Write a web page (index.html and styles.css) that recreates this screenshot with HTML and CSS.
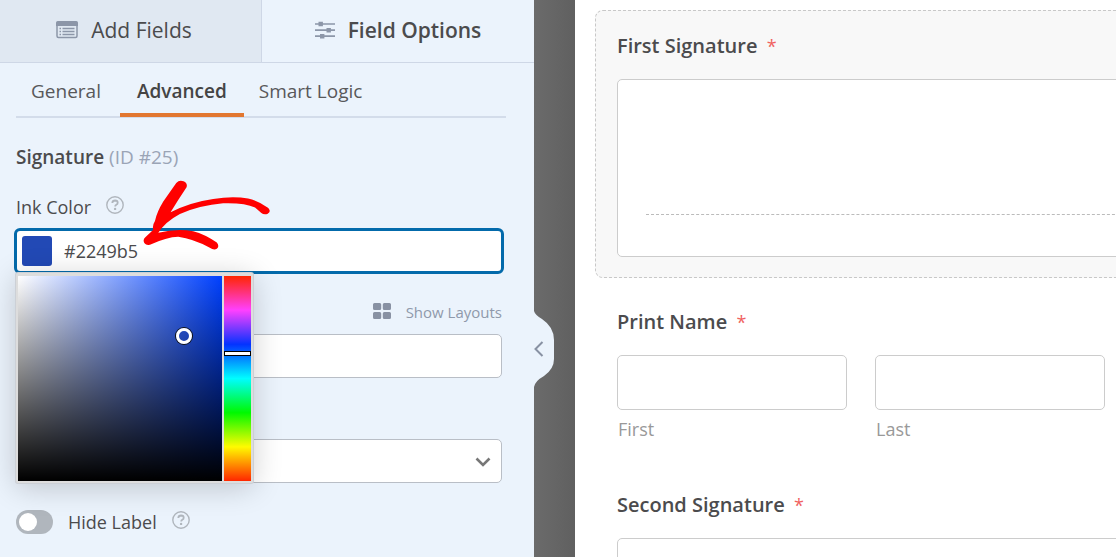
FILE: index.html
```html
<!DOCTYPE html>
<html lang="en">
<head>
<meta charset="utf-8">
<title>Form Builder</title>
<link rel="stylesheet" href="styles.css">
</head>
<body>
<div class="builder">
  <aside class="sidebar">
    <nav class="tabs">
      <button type="button" class="tab">
        <svg class="tab-icon" width="22" height="18" viewBox="0 0 22 18" aria-hidden="true">
          <rect x="1" y="1" width="20" height="15.5" rx="1.5" fill="none" stroke="#8c96a8" stroke-width="1.5"/>
          <path d="M0 2q0-2 2-2h18q2 0 2 2v3H0z" fill="#8c96a8"/>
          <path d="M3.500 7.500h1.500M3.500 10.500h1.500M3.500 13.500h1.500M6.500 7.500h12M6.500 10.500h12M6.500 13.500h12" stroke="#8c96a8" stroke-width="1.600"/>
        </svg>
        Add Fields
      </button>
      <button type="button" class="tab tab-active">
        <svg class="tab-icon" width="20" height="18" viewBox="0 0 20 18" aria-hidden="true">
          <path d="M0 3h20M0 9.200h20M0 15.200h20" stroke="#8c96a8" stroke-width="1.700"/>
          <path d="M3.500.8h4.400v4.400H3.500zM11.500 7h4.400v4.400h-4.400zM5 13h4.400v4.400H5z" fill="#8c96a8"/>
        </svg>
        Field Options
      </button>
    </nav>
    <div class="panel">
      <nav class="subnav">
        <a href="#general" class="sublink">General</a>
        <a href="#advanced" class="sublink sublink-active">Advanced</a>
        <a href="#logic" class="sublink">Smart Logic</a>
      </nav>
      <h2 class="field-title">Signature <span class="field-id">(ID #25)</span></h2>

      <div class="label-row">
        <label for="ink" class="label">Ink Color</label>
        <svg class="help" width="18" height="18" viewBox="0 0 18 18" aria-hidden="true">
          <circle cx="9" cy="9" r="8.200" fill="none" stroke="#b0b6bd" stroke-width="1.400"/>
          <path d="M6.300 7q.2-2.500 2.800-2.500 2.600.1 2.600 2.200 0 1.300-1.400 2-1.100.6-1.100 1.800" fill="none" stroke="#b0b6bd" stroke-width="1.800"/>
          <circle cx="9.100" cy="12.900" r="1.200" fill="#b0b6bd"/>
        </svg>
      </div>
      <div class="color-field">
        <button type="button" class="swatch" aria-label="Ink color swatch"></button>
        <input id="ink" class="color-value" type="text" value="#2249b5">
        <div class="picker">
          <div class="shade"><span class="shade-handle"></span></div>
          <div class="hue"><span class="hue-handle"></span></div>
        </div>
        <svg class="arrow" viewBox="420 0 400 220" aria-hidden="true">
          <path fill="#f00" d="M529 9Q538-1 551 4Q564 10 560 22Q534 61 512 97Q570 67 640 57Q700 48 745 56Q775 62 806 84Q816 96 803 102Q792 105 785 99L766 83Q735 68 670 70Q600 76 540 102Q495 126 475 159Q530 145 580 154Q615 163 651 188Q660 199 651 207Q642 212 630 204Q580 177 535 171Q500 172 450 195Q434 197 431 184Q430 177 436 172L460 150Q456 137 465 123Q471 96 490 65Z"/>
        </svg>
      </div>

      <div class="layouts-row">
        <button type="button" class="layouts">
          <svg class="layouts-icon" width="18" height="16" viewBox="0 0 18 16" aria-hidden="true">
            <path d="M1.500 0h5.200q1.500 0 1.500 1.500v4q0 1.500-1.500 1.500H1.500Q0 7 0 5.500v-4Q0 0 1.500 0zM11.300 0h5.200Q18 0 18 1.500v4Q18 7 16.500 7h-5.200q-1.500 0-1.500-1.500v-4Q9.800 0 11.300 0zM1.500 9h5.200q1.500 0 1.500 1.500v4q0 1.500-1.500 1.500H1.500Q0 16 0 14.500v-4Q0 9 1.500 9zM11.300 9h5.200q1.500 0 1.500 1.500v4q0 1.500-1.500 1.500h-5.200q-1.500 0-1.500-1.500v-4Q9.800 9 11.300 9z" fill="#8891a3"/>
          </svg>
          Show Layouts
        </button>
      </div>
      <input class="control" type="text" aria-label="CSS classes">
      <div class="select-wrap">
        <select class="control" aria-label="Field size"><option></option></select>
        <svg class="chevron" width="16" height="10" viewBox="0 0 16 10" aria-hidden="true">
          <path d="M1.500 1.500L8 8l6.500-6.500" fill="none" stroke="#777" stroke-width="2.600"/>
        </svg>
      </div>
      <div class="toggle-row">
        <input id="hide" class="toggle" type="checkbox" role="switch">
        <label for="hide" class="label">Hide Label</label>
        <svg class="help" width="18" height="18" viewBox="0 0 18 18" aria-hidden="true">
          <circle cx="9" cy="9" r="8.200" fill="none" stroke="#b0b6bd" stroke-width="1.400"/>
          <path d="M6.300 7q.2-2.500 2.800-2.500 2.600.1 2.600 2.200 0 1.300-1.400 2-1.100.6-1.100 1.800" fill="none" stroke="#b0b6bd" stroke-width="1.800"/>
          <circle cx="9.100" cy="12.900" r="1.200" fill="#b0b6bd"/>
        </svg>
      </div>
    </div>
    <button type="button" class="collapse" aria-label="Collapse sidebar">
      <svg width="22" height="76" viewBox="0 0 22 76" aria-hidden="true">
        <path d="M0 0Q1 4 8 8Q20 16 20 29V48Q20 58 10 65Q1 70 0 76Z" fill="#ebf3fc"/>
        <path d="M8.500 31L1.500 38L8.500 45" fill="none" stroke="#8891a3" stroke-width="2"/>
      </svg>
    </button>
  </aside>
  <main class="preview">
    <section class="field field-selected">
      <h3 class="field-label">First Signature <span class="required">*</span></h3>
      <div class="signature"></div>
    </section>
    <section class="field field-name">
      <h3 class="field-label">Print Name <span class="required">*</span></h3>
      <div class="name-row">
        <div class="name-col">
          <input id="first" class="name-input" type="text">
          <label for="first" class="sublabel">First</label>
        </div>
        <div class="name-col">
          <input id="last" class="name-input" type="text">
          <label for="last" class="sublabel">Last</label>
        </div>
      </div>
    </section>
    <section class="field">
      <h3 class="field-label">Second Signature <span class="required">*</span></h3>
      <div class="signature"></div>
    </section>
  </main>
</div>
</body>
</html>
```

FILE: styles.css
```css
* {
  box-sizing: border-box;
}

body {
  margin: 0;
  font-family: "Open Sans", "Noto Sans", sans-serif;
  font-size: 18px;
  line-height: 24px;
  color: #4b4b4d;
  overflow: hidden;
}

button,
input,
select {
  font: inherit;
  color: inherit;
  margin: 0;
}

button {
  border: 0;
  padding: 0;
  background: none;
}

.builder {
  display: flex;
  height: 100vh;
  background: linear-gradient(90deg, #6b6b6b 534px, #606060 575px);
}

.sidebar {
  position: relative;
  flex: 0 0 534px;
  background: #ebf3fc;
}

.tabs {
  display: grid;
  grid-template-columns: 262px 1fr;
  height: 63px;
}

.tab {
  display: flex;
  align-items: center;
  justify-content: center;
  gap: 13px;
  padding: 0 13px 2px 0;
  border-bottom: 1px solid #ced7e6;
  border-right: 1px solid #ced7e6;
  background: #e0e8f2;
  font-size: 21px;
}

.tab-active {
  padding-right: 0;
  border-right: 0;
  background: #ebf3fc;
  font-weight: 600;
}

.panel {
  padding: 0 32px 0 16px;
}

.subnav {
  display: flex;
  height: 55px;
  margin-right: -4px;
  border-bottom: 2px solid #d3dcea;
  font-size: 19px;
}

.sublink {
  display: block;
  padding: 16px 15px 0;
  margin-bottom: -1px;
  color: #58585a;
  text-decoration: none;
}

.sublink-active {
  padding: 16px 17px 0;
  margin-left: 4px;
  border-bottom: 4px solid #e27730;
  color: #444;
  font-weight: 600;
}

.field-title {
  margin: 27px 0 0;
  font-size: 19px;
  line-height: 24px;
  font-weight: 600;
}

.field-id {
  color: #9aa4b6;
  font-weight: 400;
}

.label-row {
  display: flex;
  align-items: center;
  gap: 15px;
  margin-top: 26px;
}

.help {
  margin-bottom: 4px;
}

.color-field {
  position: relative;
  display: flex;
  align-items: center;
  height: 46px;
  margin: 9px -2px 0;
  border: 3px solid #036aab;
  border-radius: 6px;
  background: #fff;
}

.swatch {
  width: 30px;
  height: 30px;
  margin-left: 5px;
  border-radius: 3px;
  background: #2249b5;
}

.color-value {
  flex: 1;
  min-width: 0;
  padding: 0 0 0 12px;
  border: 0;
  outline: 0;
  background: none;
}

.picker {
  position: absolute;
  top: 42px;
  left: -1px;
  z-index: 2;
  display: flex;
  gap: 2px;
  width: 237px;
  height: 210px;
  padding: 3px 2px 2px;
  border-radius: 2px;
  background: #ddd;
  box-shadow: 0 0 0 1px #ccd0d6, 0 4px 30px rgba(0, 0, 0, 0.2);
}

.shade {
  position: relative;
  flex: 1;
  background: linear-gradient(0deg, #000, transparent), linear-gradient(90deg, #fff, #0040ff);
}

.shade-handle {
  position: absolute;
  left: 158px;
  top: 52px;
  width: 16px;
  height: 16px;
  border: 3px solid #fff;
  border-radius: 50%;
  box-shadow: 0 0 0 1px #111;
}

.hue {
  position: relative;
  width: 27px;
  background: linear-gradient(180deg, #ff2600, #ff40ff, #0433ff, #00fdff, #00f900, #fffb00, #ff2600);
}

.hue-handle {
  position: absolute;
  left: 0;
  right: 0;
  top: 75px;
  height: 5px;
  border: 1px solid #000;
  background: #fff;
}

.arrow {
  position: absolute;
  left: 123px;
  top: -51px;
  width: 133px;
  z-index: 3;
}

.layouts-row {
  display: flex;
  justify-content: flex-end;
  margin-top: 26px;
}

.layouts {
  display: flex;
  align-items: center;
  gap: 15px;
  color: #8f99ab;
  font-size: 15px;
}

.layouts-icon {
  margin-bottom: 3px;
}

.control {
  display: block;
  width: 100%;
  height: 44px;
  border: 1px solid #b9bec6;
  border-radius: 5px;
  background: #fff;
  appearance: none;
}

.layouts-row + .control {
  margin-top: 10px;
}

.select-wrap {
  position: relative;
  margin-top: 61px;
}

.chevron {
  position: absolute;
  right: 11px;
  top: 18px;
}

.toggle-row {
  display: flex;
  align-items: center;
  gap: 15px;
  margin-top: 27px;
}

.toggle {
  width: 37px;
  height: 24px;
  padding: 3px;
  border-radius: 12px;
  background: #b0b6bd;
  appearance: none;
}

.toggle::before {
  content: "";
  display: block;
  width: 18px;
  height: 18px;
  border-radius: 50%;
  background: #fff;
}

.toggle:checked::before {
  margin-left: auto;
}

.collapse {
  position: absolute;
  left: 100%;
  top: 311px;
  height: 76px;
}

.collapse svg {
  display: block;
}

.preview {
  flex: 1;
  min-width: 0;
  margin-left: 41px;
  padding: 10px 0 0 20px;
  background: #fff;
  overflow: hidden;
}

.field {
  margin-right: -16px;
  padding: 23px 20px 20px 21px;
  border: 1px dashed transparent;
  border-radius: 8px;
}

.field-selected {
  padding-right: 0;
  background: #f8f8f8;
  border-color: #c8c8c8;
}

.field-label {
  margin: 0 0 21px;
  font-size: 20px;
  line-height: 24px;
  font-weight: 600;
}

.required {
  margin-left: 4px;
  color: #f0625f;
  font-size: 18px;
  font-weight: 400;
}

.signature {
  display: flex;
  flex-direction: column;
  justify-content: flex-end;
  height: 178px;
  margin-right: -20px;
  padding: 0 0 41px 28px;
  border: 1px solid #ccc;
  border-radius: 5px;
  background: #fff;
}

.signature::after {
  content: "";
  border-top: 1px dashed #bbb;
}

.name-row {
  display: grid;
  grid-template-columns: 1fr 1fr;
  gap: 28px;
  padding-right: 6px;
}

.name-col {
  display: flex;
  flex-direction: column;
  gap: 7px;
}

.name-input {
  width: 100%;
  height: 55px;
  border: 1px solid #ccc;
  border-radius: 5px;
  background: #fff;
}

.sublabel {
  padding-left: 1px;
  color: #999;
}

.field-name {
  padding-top: 31px;
  padding-bottom: 27px;
}
```
